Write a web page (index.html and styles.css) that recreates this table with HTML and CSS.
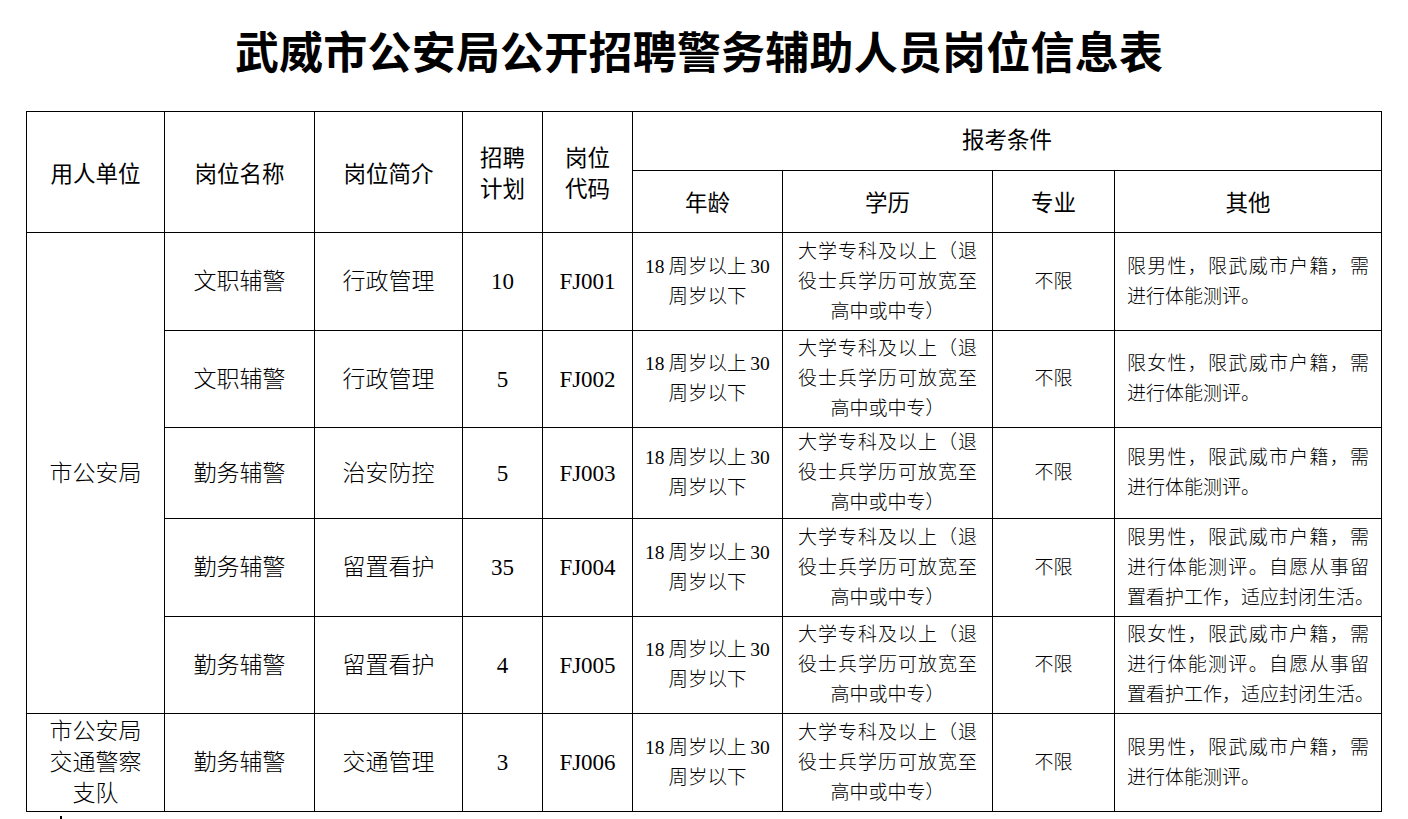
FILE: index.html
```html
<!DOCTYPE html>
<html lang="zh-CN">
<head>
<meta charset="utf-8">
<title>武威市公安局公开招聘警务辅助人员岗位信息表</title>
<link rel="stylesheet" href="styles.css">
</head>
<body>
<div class="page">
  <h1 class="title">武威市公安局公开招聘警务辅助人员岗位信息表</h1>
  <table class="grid">
    <colgroup>
      <col class="c1"><col class="c2"><col class="c3"><col class="c4"><col class="c5">
      <col class="c6"><col class="c7"><col class="c8"><col class="c9">
    </colgroup>
    <thead>
      <tr class="h1">
        <th rowspan="2">用人单位</th>
        <th rowspan="2">岗位名称</th>
        <th rowspan="2">岗位简介</th>
        <th rowspan="2" class="two">招聘<br>计划</th>
        <th rowspan="2" class="two">岗位<br>代码</th>
        <th colspan="4" class="cond">报考条件</th>
      </tr>
      <tr class="h2">
        <th>年龄</th>
        <th>学历</th>
        <th>专业</th>
        <th>其他</th>
      </tr>
    </thead>
    <tbody>
      <tr class="r1">
        <td rowspan="5" class="big">市公安局</td>
        <td class="big">文职辅警</td>
        <td class="big">行政管理</td>
        <td class="big">10</td>
        <td class="big">FJ001</td>
        <td class="small age">18 周岁以上 30<br>周岁以下</td>
        <td class="small edu"><div class="jl">大学专科及以上（退</div><div class="jl">役士兵学历可放宽至</div><div class="cl">高中或中专）</div></td>
        <td class="small">不限</td>
        <td class="small other"><div class="jl">限男性，限武威市户籍，需</div><div>进行体能测评。</div></td>
      </tr>
      <tr class="r2">
        <td class="big">文职辅警</td>
        <td class="big">行政管理</td>
        <td class="big">5</td>
        <td class="big">FJ002</td>
        <td class="small age">18 周岁以上 30<br>周岁以下</td>
        <td class="small edu"><div class="jl">大学专科及以上（退</div><div class="jl">役士兵学历可放宽至</div><div class="cl">高中或中专）</div></td>
        <td class="small">不限</td>
        <td class="small other"><div class="jl">限女性，限武威市户籍，需</div><div>进行体能测评。</div></td>
      </tr>
      <tr class="r3">
        <td class="big">勤务辅警</td>
        <td class="big">治安防控</td>
        <td class="big">5</td>
        <td class="big">FJ003</td>
        <td class="small age">18 周岁以上 30<br>周岁以下</td>
        <td class="small edu"><div class="jl">大学专科及以上（退</div><div class="jl">役士兵学历可放宽至</div><div class="cl">高中或中专）</div></td>
        <td class="small">不限</td>
        <td class="small other"><div class="jl">限男性，限武威市户籍，需</div><div>进行体能测评。</div></td>
      </tr>
      <tr class="r4">
        <td class="big">勤务辅警</td>
        <td class="big">留置看护</td>
        <td class="big">35</td>
        <td class="big">FJ004</td>
        <td class="small age">18 周岁以上 30<br>周岁以下</td>
        <td class="small edu"><div class="jl">大学专科及以上（退</div><div class="jl">役士兵学历可放宽至</div><div class="cl">高中或中专）</div></td>
        <td class="small">不限</td>
        <td class="small other"><div class="jl">限男性，限武威市户籍，需</div><div class="jl">进行体能测评。自愿从事留</div><div class="jl">置看护工作，适应封闭生活。</div></td>
      </tr>
      <tr class="r5">
        <td class="big">勤务辅警</td>
        <td class="big">留置看护</td>
        <td class="big">4</td>
        <td class="big">FJ005</td>
        <td class="small age">18 周岁以上 30<br>周岁以下</td>
        <td class="small edu"><div class="jl">大学专科及以上（退</div><div class="jl">役士兵学历可放宽至</div><div class="cl">高中或中专）</div></td>
        <td class="small">不限</td>
        <td class="small other"><div class="jl">限女性，限武威市户籍，需</div><div class="jl">进行体能测评。自愿从事留</div><div class="jl">置看护工作，适应封闭生活。</div></td>
      </tr>
      <tr class="r6">
        <td class="big unit3">市公安局<br>交通警察<br>支队</td>
        <td class="big">勤务辅警</td>
        <td class="big">交通管理</td>
        <td class="big">3</td>
        <td class="big">FJ006</td>
        <td class="small age">18 周岁以上 30<br>周岁以下</td>
        <td class="small edu"><div class="jl">大学专科及以上（退</div><div class="jl">役士兵学历可放宽至</div><div class="cl">高中或中专）</div></td>
        <td class="small">不限</td>
        <td class="small other"><div class="jl">限男性，限武威市户籍，需</div><div>进行体能测评。</div></td>
      </tr>
    </tbody>
  </table>
  <div class="caret"></div>
</div>
</body>
</html>
```
FILE: styles.css
```css
html, body {
  margin: 0;
  padding: 0;
  background: #ffffff;
}

.page {
  width: 1408px;
  height: 819px;
  overflow: hidden;
  padding-left: 26px;
  box-sizing: border-box;
  color: #000;
}

.title {
  margin: 0;
  height: 111px;
  box-sizing: border-box;
  padding: 0 36px 12px 0;
  display: flex;
  align-items: center;
  justify-content: center;
  font-family: "Noto Sans CJK SC", sans-serif;
  font-weight: 700;
  font-size: 44px;
  letter-spacing: 0.2px;
  line-height: 1;
}

.grid {
  border-collapse: collapse;
  table-layout: fixed;
  width: 1355px;
}

.c1 { width: 138px; }
.c2 { width: 150px; }
.c3 { width: 148px; }
.c4 { width: 80px; }
.c5 { width: 90px; }
.c6 { width: 150px; }
.c7 { width: 210px; }
.c8 { width: 122px; }
.c9 { width: 267px; }

.grid th,
.grid td {
  border: 1px solid #000;
  padding: 0;
  text-align: center;
  vertical-align: middle;
}

.grid th {
  font-family: "Noto Sans CJK SC", sans-serif;
  font-weight: 400;
  font-size: 22.5px;
  line-height: 31px;
}

.grid th.cond {
  padding-bottom: 5px;
}

.h1 { height: 59px; }
.h2 { height: 62px; }
.r1 { height: 98px; }
.r2 { height: 97px; }
.r3 { height: 91px; }
.r4 { height: 98px; }
.r5 { height: 97px; }
.r6 { height: 98px; }

.grid td {
  font-family: "Liberation Serif", "Noto Sans CJK SC", serif;
  font-weight: 300;
}

.big {
  font-size: 23px;
  line-height: 31px;
}

.small {
  font-size: 19px;
  line-height: 30px;
}

.age {
  font-size: 19.5px;
  word-spacing: -1px;
}

.edu {
  padding: 0 15px !important;
}

.other {
  padding: 0 12px !important;
  text-align: left !important;
}

.jl {
  text-align: justify;
  text-align-last: justify;
  white-space: nowrap;
}

.cl {
  text-align: center;
}

.caret {
  width: 2px;
  height: 5px;
  margin: 4px 0 0 34px;
  background: #000;
}
```
